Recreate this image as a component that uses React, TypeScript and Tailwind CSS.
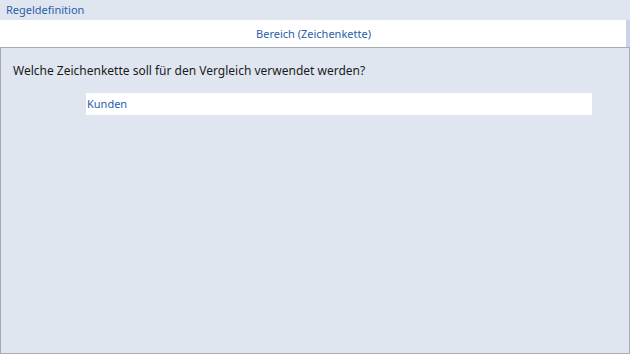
import React from "react";

const font = { fontFamily: '"Noto Sans", "Open Sans", sans-serif' };

export default function App() {
  return (
    <div className="w-[630px] h-[354px] flex flex-col bg-[#e0e6f0] text-[12px]" style={font}>
      {/* Kopfzeile */}
      <div className="h-[20px] flex items-center pl-[6px] pb-[1px] text-[11px] text-[#2960a8] leading-none">
        Regeldefinition
      </div>

      {/* Abschnittstitel */}
      <div className="h-[27px] flex">
        <div className="flex-1 bg-white flex items-center justify-center pl-[1px] text-[11px] text-[#2960a8] leading-none">
          Bereich (Zeichenkette)
        </div>
        <div className="w-[4px] bg-[#c9d3ed]" />
      </div>

      {/* Inhalt */}
      <div className="flex-1 border border-[#a7abb2] flex flex-col">
        <div className="pl-[12px] pt-[17px] h-[45px] text-[#1a1a1a] leading-none">
          Welche Zeichenkette soll für den Vergleich verwendet werden?
        </div>
        <div className="pl-[85px]">
          <div className="w-[506px] h-[22px] bg-white flex items-center pl-[1px] pb-[1px] text-[11px] text-[#1f5cb0] leading-none">
            Kunden
          </div>
        </div>
      </div>
    </div>
  );
}
